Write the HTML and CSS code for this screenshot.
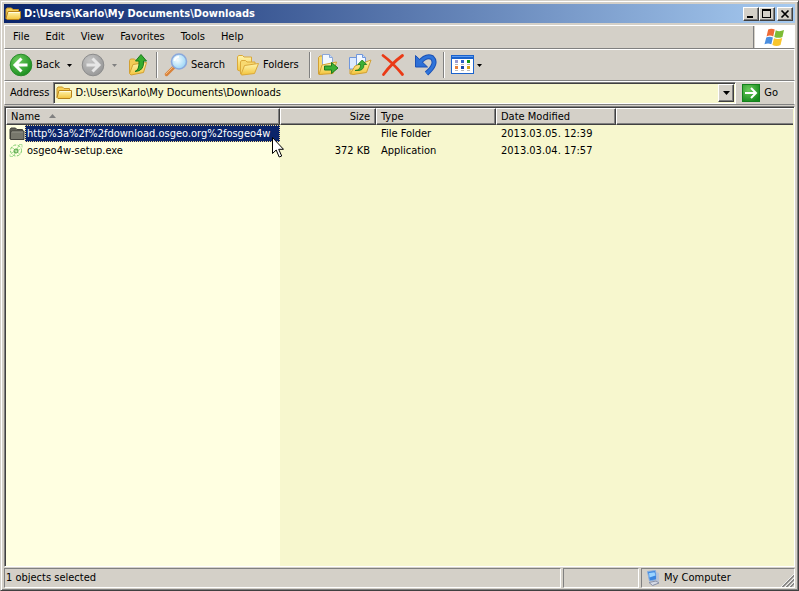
FILE: index.html
```html
<!DOCTYPE html>
<html lang="en">
<head>
    <meta charset="UTF-8">
    <meta name="viewport" content="width=device-width, initial-scale=1.0">
    <title>D:\Users\Karlo\My Documents\Downloads</title>
    <link rel="stylesheet" href="styles.css">
</head>
<body>
    <!-- Shapes used more than once -->
    <svg class="defs" aria-hidden="true">
        <defs>
            <linearGradient id="gold" x1="0" y1="0" x2="0" y2="1">
                <stop offset="0" stop-color="#fff6b0"/>
                <stop offset="1" stop-color="#f3c43c"/>
            </linearGradient>
            <radialGradient id="green" cx="0.35" cy="0.3" r="0.8">
                <stop offset="0" stop-color="#6ccb5c"/>
                <stop offset="1" stop-color="#158a1c"/>
            </radialGradient>
            <radialGradient id="gray" cx="0.35" cy="0.3" r="0.8">
                <stop offset="0" stop-color="#c4c4c4"/>
                <stop offset="1" stop-color="#949494"/>
            </radialGradient>
            <radialGradient id="lens" cx="0.4" cy="0.4" r="0.7">
                <stop offset="0" stop-color="#f4fdff"/>
                <stop offset="1" stop-color="#8fd0f4"/>
            </radialGradient>
            <symbol id="folder" viewBox="0 0 16 16">
                <path d="M1 12.500V3.500L2 2h4.500L8 3.500h5.500V6" fill="#f6cf55" stroke="#c8962a"/>
                <path d="M1 12.500L3 5.500h12.500V12l-1.500 1.500H2z" fill="url(#gold)" stroke="#b8831a"/>
                <path d="M3.700 6.500h11" stroke="#fffbe0"/>
            </symbol>
            <symbol id="caret" viewBox="0 0 5 3">
                <path d="M0 0h5L2.500 3z" fill="currentColor"/>
            </symbol>
        </defs>
    </svg>

    <div class="window">
        <header class="title-bar">
            <svg class="icon"><use href="#folder"/></svg>
            <h1 class="title">D:\Users\Karlo\My Documents\Downloads</h1>
            <button class="caption-button" aria-label="Minimize">
                <svg width="12" height="10" shape-rendering="crispEdges"><path d="M2 7h6v2H2z"/></svg>
            </button>
            <button class="caption-button" aria-label="Maximize">
                <svg width="12" height="10" shape-rendering="crispEdges"><path d="M1 0h9v9H1zM2 2v6h7V2z" fill-rule="evenodd"/></svg>
            </button>
            <button class="caption-button close" aria-label="Close">
                <svg width="12" height="10"><path d="M2.500 1.500l7 7M9.500 1.500l-7 7" stroke="#000" stroke-width="1.700"/></svg>
            </button>
        </header>

        <div class="menu-row">
            <nav class="menu">
                <button class="menu-item">File</button>
                <button class="menu-item">Edit</button>
                <button class="menu-item">View</button>
                <button class="menu-item">Favorites</button>
                <button class="menu-item">Tools</button>
                <button class="menu-item">Help</button>
            </nav>
            <div class="brand">
                <svg width="21" height="19" viewBox="0 0 19 18">
                    <path d="M3.500 1.500Q6.500-.3 9.700 1.500L8.300 8Q5.200 6.400 2 8z" fill="#ee6a35"/>
                    <path d="M10.700 2.200Q14 4 18.500 2L17 8.500Q13 10.200 9.300 8.500z" fill="#7cbb35"/>
                    <path d="M1.700 9Q4.800 7.400 8 9L6.500 15.500Q3.500 13.800 0 15.500z" fill="#4a8ee0"/>
                    <path d="M9 9.600Q12.500 11.200 16.800 9.500L15.200 16Q11.500 18 7.500 16z" fill="#f8c52c"/>
                </svg>
            </div>
        </div>

        <div class="toolbar">
            <button class="tool">
                <svg width="24" height="24" viewBox="0 0 24 24">
                    <circle cx="12" cy="12" r="10.800" fill="url(#green)" stroke="#2a8a2c"/>
                    <path d="M12.500 5.500L6 12l6.500 6.500M6.500 12H18.500" fill="none" stroke="#fff" stroke-width="3"/>
                </svg>
                <span>Back</span>
                <svg class="caret"><use href="#caret"/></svg>
            </button>
            <button class="tool forward" aria-label="Forward" disabled>
                <svg width="24" height="24" viewBox="0 0 24 24">
                    <circle cx="12" cy="12" r="10.800" fill="url(#gray)" stroke="#8c8c8c"/>
                    <path d="M11.500 5.500L18 12l-6.500 6.500M17.500 12H5.500" fill="none" stroke="#e6e6e6" stroke-width="3"/>
                </svg>
                <svg class="caret"><use href="#caret"/></svg>
            </button>
            <button class="tool up" aria-label="Up">
                <svg width="22" height="24" viewBox="0 0 22 24">
                    <path d="M1.500 20V7.500l1-1.500h4L8 7.500h7V16" fill="#f3cc55" stroke="#d2a032"/>
                    <path d="M1.500 20.500L5 11.500l13.500-2-3 10L3 22z" fill="url(#gold)" stroke="#d2a032"/>
                    <path d="M7 18.500Q11.500 17 11 8H7.500L13 1.500 18.500 8h-3Q16.500 18 7 18.500z" fill="#35ac2e" stroke="#1b7a1c"/>
                </svg>
            </button>
            <span class="divider"></span>
            <button class="tool search">
                <svg width="24" height="24" viewBox="0 0 24 24">
                    <path d="M9.500 14.500L2.500 21.500" stroke="#d9823a" stroke-width="3.500" stroke-linecap="round"/>
                    <path d="M8.500 14.500L2 21" stroke="#f7bd83" stroke-linecap="round"/>
                    <circle cx="15" cy="8.500" r="7.500" fill="url(#lens)" stroke="#8aa8dc" stroke-width="1.600"/>
                    <path d="M10.500 8Q11 4 15 3.800" fill="none" stroke="#fff" stroke-width="2"/>
                </svg>
                <span>Search</span>
            </button>
            <button class="tool folders">
                <svg width="24" height="24" viewBox="0 0 24 24">
                    <path d="M1.500 17V4l1-1.500h4L8 4h7.500v5L5 18.500z" fill="url(#gold)" stroke="#dba93a"/>
                    <path d="M4.500 21V9l1-1.500h4L11 9h8v3" fill="#f8d970" stroke="#dba93a"/>
                    <path d="M5 21.500L8.500 12.500l14-2-4 10L6 22z" fill="url(#gold)" stroke="#dba93a"/>
                </svg>
                <span>Folders</span>
            </button>
            <span class="divider"></span>
            <button class="tool move" aria-label="Move to">
                <svg width="22" height="24" viewBox="0 0 22 24">
                    <path d="M1.500 21V4.500L3 3h3v18z" fill="#f8d970" stroke="#d2a032"/>
                    <path d="M5.500 1.500h7l3 3V17h-10z" fill="#f3f8ff" stroke="#8aa6d8"/>
                    <path d="M12.500 1.500v3h3" fill="#c8daf6" stroke="#8aa6d8"/>
                    <path d="M2 21.500L5 12l14.500-3-3.500 11.500z" fill="url(#gold)" stroke="#d2a032"/>
                    <path d="M7.500 13h7V9.500l6.500 5.500-6.500 5.500V17h-7z" fill="#3db035" stroke="#1b7a1c"/>
                </svg>
            </button>
            <button class="tool copy" aria-label="Copy to">
                <svg width="24" height="24" viewBox="0 0 24 24">
                    <path d="M2 21V9l1.500-1.500H7V21z" fill="#f8d970" stroke="#d2a032"/>
                    <path d="M1.500 4.500h7l2 2V16h-9z" fill="#dceaff" stroke="#6f96dc"/>
                    <path d="M8.500 1.500h6l3 3V14h-9z" fill="#f3f8ff" stroke="#6f96dc"/>
                    <path d="M14.500 1.500v3h3" fill="#c8daf6" stroke="#6f96dc"/>
                    <path d="M2.500 20.500L7 13l16-6-4.500 12.500L5 21.500z" fill="url(#gold)" stroke="#d2a032"/>
                    <path d="M7 17.500Q13 17 12.500 11.500H9.800l4.400-4.500 4.500 4.500h-2.800Q16.500 18.500 7 17.500z" fill="#3db035" stroke="#1b7a1c" stroke-width=".8"/>
                </svg>
            </button>
            <button class="tool delete" aria-label="Delete">
                <svg width="24" height="24" viewBox="0 0 24 24">
                    <path d="M2 2.500Q12 10 21.500 21.500M21.500 2.500Q10 11 2.500 21.500" fill="none" stroke="#ea3a16" stroke-width="2.800" stroke-linecap="round"/>
                </svg>
            </button>
            <button class="tool undo" aria-label="Undo">
                <svg width="24" height="24" viewBox="0 0 24 24">
                    <path d="M5 10Q12 1.500 18 4.500 24 10.500 12.500 20.500" fill="none" stroke="#1b51b5" stroke-width="5"/>
                    <path d="M1.500 2.500V14H13.500z" fill="#2d6fd6" stroke="#1b51b5"/>
                    <path d="M5 10Q12 1.500 18 4.500 24 10.500 12.500 20.500" fill="none" stroke="#2f74da" stroke-width="3"/>
                </svg>
            </button>
            <span class="divider"></span>
            <button class="tool views" aria-label="Views">
                <svg width="24" height="20" viewBox="0 0 24 20" shape-rendering="crispEdges">
                    <path d="M0 0h23v19H0z" fill="#1a62cc"/>
                    <path d="M1 4h21v14H1z" fill="#fff"/>
                    <path d="M1 1h21v1H1z" fill="#5c9bf0"/>
                    <path d="M4 5h3v3H4z" fill="#9a9ad0"/>
                    <path d="M10 5h3v3h-3z" fill="#2c5fc8"/>
                    <path d="M16 5h3v3h-3z" fill="#109a18"/>
                    <path d="M4 11h3v3H4z" fill="#e8803a"/>
                    <path d="M10 11h3v3h-3z" fill="#1848a8"/>
                    <path d="M16 11h3v3h-3z" fill="#d8a018"/>
                    <path d="M4 9h3v1H4zM10 9h3v1h-3zM16 9h3v1h-3zM4 15h3v1H4zM10 15h3v1h-3zM16 15h3v1h-3z" fill="#b8b8b8"/>
                </svg>
                <svg class="caret"><use href="#caret"/></svg>
            </button>
        </div>

        <form class="address-bar">
            <label for="address">Address</label>
            <div class="combo">
                <svg class="icon"><use href="#folder"/></svg>
                <select id="address">
                    <option>D:\Users\Karlo\My Documents\Downloads</option>
                </select>
                <span class="combo-arrow"><svg width="7" height="4" viewBox="0 0 7 4"><path d="M0 0h7L3.500 4z"/></svg></span>
            </div>
            <button type="button" class="go">
                <svg width="18" height="18" viewBox="0 0 18 18">
                    <path d="M0 0h18v18H0z" fill="#13801c"/>
                    <path d="M1 1h16v16H1z" fill="url(#green)"/>
                    <path d="M9 4l5 5-5 5M13.500 9H3" fill="none" stroke="#fff" stroke-width="2"/>
                </svg>
                <span>Go</span>
            </button>
        </form>

        <main class="list">
            <table class="files">
                <colgroup>
                    <col class="col-name">
                    <col class="col-size">
                    <col class="col-type">
                    <col class="col-date">
                    <col>
                </colgroup>
                <thead>
                    <tr>
                        <th>Name <svg class="sort" width="7" height="4" viewBox="0 0 7 4"><path d="M0 4h7L3.500 0z" fill="#808080"/></svg></th>
                        <th class="size">Size</th>
                        <th>Type</th>
                        <th>Date Modified</th>
                        <th class="rest"></th>
                    </tr>
                </thead>
                <tbody>
                    <tr>
                        <td class="name">
                            <div class="file">
                                <svg class="icon" viewBox="0 0 16 16">
                                    <path d="M1 13V3.500L2 2h4.500L8 3.500h5.500V6" fill="#5f5f55" stroke="#42423c"/>
                                    <path d="M1.500 13.500V6l1-1h12.500v8.500z" fill="#77776c" stroke="#42423c"/>
                                    <path d="M3 6h11" stroke="#96968a"/>
                                </svg>
                                <span class="file-name selected">http%3a%2f%2fdownload.osgeo.org%2fosgeo4w</span>
                                <svg class="pointer" width="12" height="21" viewBox="0 0 12 21">
                                    <path d="M.5.500v16l3.700-3.500 3 7 2.500-1-3-6.700H11.500z" fill="#fff" stroke="#000"/>
                                </svg>
                            </div>
                        </td>
                        <td class="size"></td>
                        <td>File Folder</td>
                        <td>2013.03.05. 12:39</td>
                        <td></td>
                    </tr>
                    <tr>
                        <td class="name">
                            <div class="file">
                                <svg class="icon" viewBox="0 0 16 16" fill="none" stroke="#7ccb6a">
                                    <circle cx="7" cy="7.500" r="5.500" stroke-dasharray="3 1.500"/>
                                    <path d="M2 10.500L7 7.500l3-5M3 4.500l4 3 4 4M7 7.500l4-1M7 7.500l-2 5" stroke="#a4dc92"/>
                                    <circle cx="7" cy="8" r="2" stroke="#4a9e3c"/>
                                    <path d="M10 1.500h3v3M1 11.500v2h3" stroke="#b0e09c"/>
                                </svg>
                                <span class="file-name">osgeo4w-setup.exe</span>
                            </div>
                        </td>
                        <td class="size">372 KB</td>
                        <td>Application</td>
                        <td>2013.03.04. 17:57</td>
                        <td></td>
                    </tr>
                </tbody>
            </table>
        </main>

        <footer class="status-bar">
            <div class="status-cell message">1 objects selected</div>
            <div class="status-cell blank"></div>
            <div class="status-cell zone">
                <svg class="icon" viewBox="0 0 16 16">
                    <path d="M2.500 1.500l8-1 1.500 9-7.500 1.500z" fill="#3a86e0" stroke="#8ab0e0"/>
                    <path d="M4 3l5.500-.8 1 3.300-6 2z" fill="#9ad4ff"/>
                    <path d="M11.500 2l2.500 1v9l-3-1z" fill="#b8c4d8"/>
                    <path d="M4 12.500l7-1.500 3 2-6.500 2.500z" fill="#d4dae6" stroke="#8890a8"/>
                </svg>
                <span>My Computer</span>
                <svg class="grip" width="13" height="13" viewBox="0 0 13 13">
                    <path d="M0 13L13 0M4 13l9-9M8 13l5-5" stroke="#fff"/>
                    <path d="M1 13.500L13.500 1M5 13.500L13.500 5M9 13.500L13.500 9" stroke="#808080" stroke-width="1.500"/>
                </svg>
            </div>
        </footer>
    </div>
</body>
</html>
```
FILE: styles.css
```css
* {
    box-sizing: border-box;
}

body {
    margin: 0;
    font-family: "DejaVu Sans Condensed", Tahoma, "DejaVu Sans", sans-serif;
    font-size: 11px;
    line-height: 14px;
    color: #000;
    background: #d4d0c8;
}

button,
select {
    font: inherit;
    color: inherit;
    background: none;
    border: none;
    margin: 0;
    padding: 0;
}

svg {
    display: block;
    flex: none;
}

.defs {
    position: absolute;
    width: 0;
    height: 0;
}

.icon {
    width: 16px;
    height: 16px;
}

.caret {
    width: 5px;
    height: 3px;
}

/* Window frame */
.window {
    display: flex;
    flex-direction: column;
    height: 100vh;
    padding: 2px;
    border: 1px solid;
    border-color: #d4d0c8 #404040 #404040 #d4d0c8;
    box-shadow: inset 1px 1px #fff, inset -1px -1px #808080;
}

.title-bar {
    display: flex;
    align-items: center;
    height: 19px;
    margin: 1px 1px 2px;
    padding: 0 2px 0 1px;
    background: linear-gradient(to right, #0a246a, #a6caf0);
}

.title {
    flex: 1;
    margin: 0 0 0 3px;
    font-size: 11px;
    font-weight: bold;
    color: #fff;
}

.caption-button {
    width: 16px;
    height: 14px;
    padding: 1px;
    background: #d4d0c8;
    border: 1px solid;
    border-color: #fff #404040 #404040 #fff;
    box-shadow: inset -1px -1px #808080;
}

.caption-button.close {
    margin-left: 2px;
}

/* Menu */
.menu-row {
    display: flex;
    height: 24px;
    margin: 0 1px;
    border: 1px solid;
    border-color: #fff #fff #808080 #fff;
}

.menu {
    display: flex;
    flex: 1;
    border-right: 1px solid #808080;
}

.menu-item {
    padding: 0 8px;
}

.brand {
    display: flex;
    align-items: center;
    justify-content: center;
    width: 39px;
    margin-left: 1px;
    background: #fff;
}

/* Toolbar */
.toolbar {
    display: flex;
    align-items: center;
    height: 32px;
    margin: 0 1px;
    padding-left: 4px;
    border: 1px solid;
    border-color: #fff #fff #808080 #fff;
}

.tool {
    display: flex;
    align-items: center;
    gap: 3px;
}

.tool .caret {
    margin-left: 4px;
}

.forward {
    margin-left: 9px;
    color: #808080;
}

.up {
    margin-left: 11px;
}

.divider {
    width: 2px;
    height: 26px;
    margin: 0 6px;
    border-left: 1px solid #808080;
    border-right: 1px solid #fff;
}

.folders {
    margin-left: 11px;
}

.folders + .divider {
    margin-left: 10px;
}

.copy,
.delete,
.undo {
    margin-left: 9px;
}

.undo + .divider {
    margin-left: 5px;
}

.views {
    gap: 0;
}

.views .caret {
    margin-left: 2px;
}

/* Address */
.address-bar {
    display: flex;
    align-items: center;
    height: 24px;
    margin: 0 1px;
    padding-left: 5px;
    border: 1px solid;
    border-color: #fff #fff #808080 #fff;
}

.combo {
    display: flex;
    align-items: center;
    flex: 1;
    height: 22px;
    margin-left: 4px;
    padding-left: 2px;
    background: #f7f7ce;
    border: 1px solid;
    border-color: #808080 #fff #fff #808080;
    box-shadow: inset 1px 1px #404040;
}

.combo select {
    flex: 1;
    padding-left: 3px;
    appearance: none;
}

.combo-arrow {
    display: flex;
    align-items: center;
    justify-content: center;
    width: 16px;
    height: 18px;
    margin-right: 1px;
    background: #d4d0c8;
    border: 1px solid;
    border-color: #fff #404040 #404040 #fff;
    box-shadow: inset -1px -1px #808080;
    pointer-events: none;
}

.go {
    display: flex;
    align-items: center;
    gap: 4px;
    margin-left: 6px;
    padding-right: 16px;
}

/* File list */
.list {
    flex: 1;
    margin: 1px 1px 0;
    overflow: hidden;
    border: 1px solid;
    border-color: #808080 #fff #fff #808080;
    box-shadow: inset 1px 1px #404040;
    padding: 1px;
    background: linear-gradient(to right, #ffffe1 275px, #f7f7ce 275px);
}

.files {
    width: 100%;
    table-layout: fixed;
    border-collapse: separate;
    border-spacing: 0;
}

.col-name {
    width: 274px;
}

.col-size {
    width: 96px;
}

.col-type,
.col-date {
    width: 120px;
}

.files th {
    height: 17px;
    padding: 0 5px 0 4px;
    font-weight: normal;
    text-align: left;
    white-space: nowrap;
    background: #d4d0c8;
    border: 1px solid;
    border-color: #fff #404040 #404040 #fff;
    box-shadow: inset -1px -1px #808080;
}

.files th.rest {
    border-right: none;
    box-shadow: inset 0 -1px #808080;
}

.sort {
    display: inline-block;
    margin-left: 6px;
    vertical-align: 2px;
}

.files td {
    height: 17px;
    padding: 0 6px 0 5px;
    white-space: nowrap;
}

.files td.name {
    padding: 0 0 0 3px;
}

.files .size {
    text-align: right;
}

.file {
    display: flex;
    align-items: center;
    position: relative;
}

.file-name {
    height: 17px;
    padding: 0 2px;
    line-height: 17px;
}

.selected {
    flex: 1;
    color: #fff;
    background: #0a246a;
    outline: 1px dotted #f5db95;
    outline-offset: -1px;
}

.pointer {
    position: absolute;
    top: 12px;
    right: -4px;
}

/* Status bar */
.status-bar {
    display: flex;
    gap: 2px;
    height: 20px;
    margin: 1px 1px 0;
}

.status-cell {
    display: flex;
    align-items: center;
    border: 1px solid;
    border-color: #808080 #fff #fff #808080;
}

.message {
    flex: 1;
    padding-left: 1px;
}

.blank {
    width: 76px;
}

.zone {
    position: relative;
    width: 154px;
    padding-left: 3px;
    gap: 3px;
}

.grip {
    position: absolute;
    right: 0;
    bottom: 0;
}
```
